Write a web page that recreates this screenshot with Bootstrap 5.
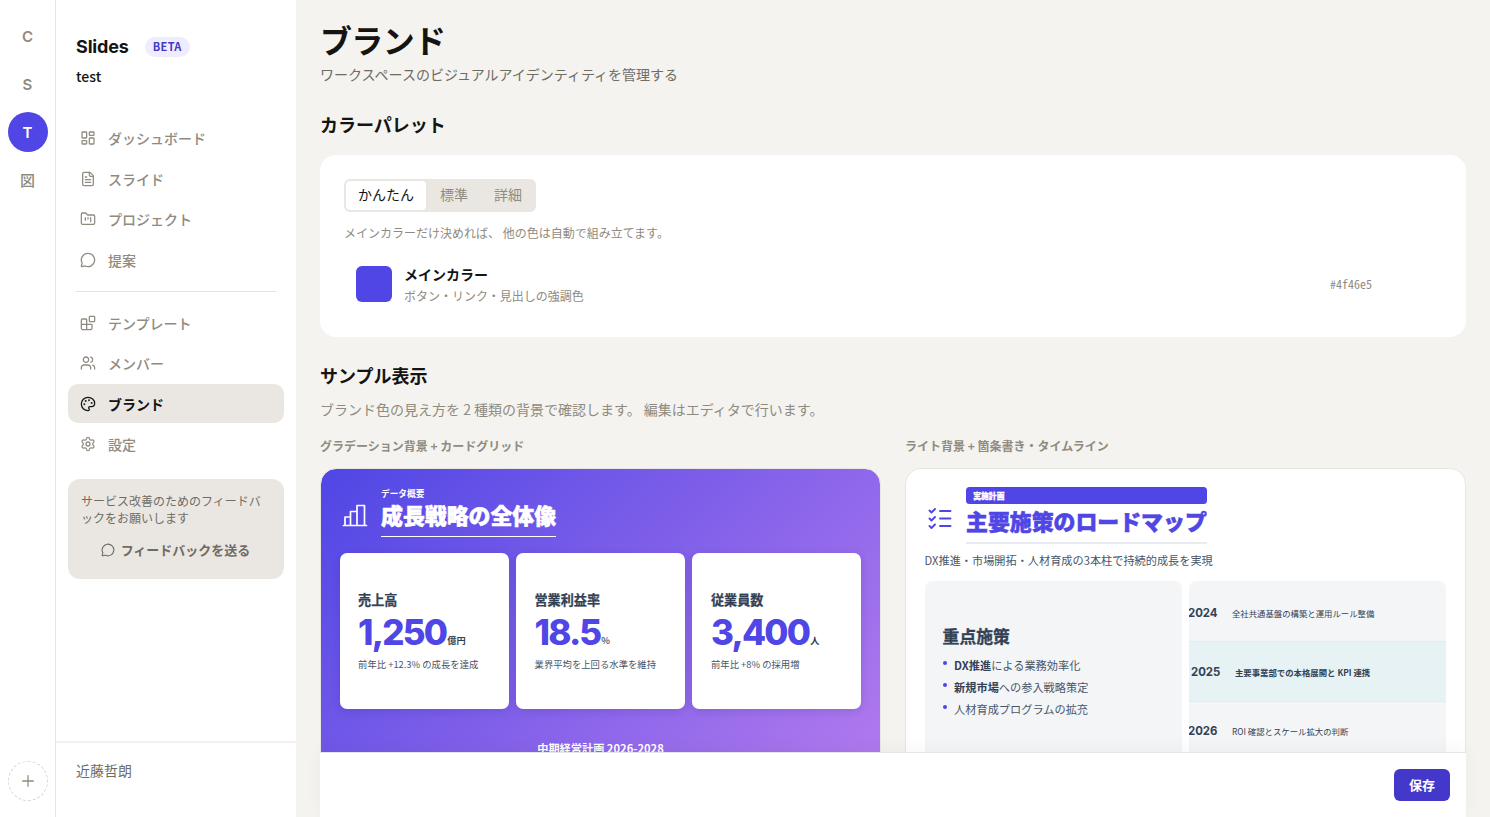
<!DOCTYPE html>
<html lang="ja">
<head>
<meta charset="utf-8">
<meta name="viewport" content="width=device-width, initial-scale=1">
<title>ブランド | Slides</title>
<link rel="stylesheet" href="https://cdn.jsdelivr.net/npm/bootstrap@5.3.0/dist/css/bootstrap.min.css">
<style>
:root{--ink:#141412;--muted:#8f8b80;--mid:#6f6c64;--brand:#4f46e5;--sand:#eae7e2;--line:#e4e4e2}
body{font-family:"Noto Sans CJK JP",sans-serif;background:#f4f3ef;color:var(--ink);font-size:14px;line-height:20px}
h1,h2,h3,p{margin:0}
.rail{width:56px;border-right:1px solid var(--line);background:#fff;padding:16px 0 16px}
.ws{width:40px;height:40px;font:600 15px/41.5px Inter,"Noto Sans CJK JP",sans-serif;color:var(--muted);text-align:center;border-radius:50%}
.ws.on{background:var(--brand);color:#fff}
.ws-add{border:1px dashed #d9d7d2;display:grid;place-items:center}
.side{width:240px;background:#fff}
.side-head{padding:35px 20px 0}
.side-nav{padding:33px 12px 0}
.brandname{font:700 18px/24px Inter,sans-serif;letter-spacing:-.15px}
.beta{background:#efedfc;color:#4338ca;font-size:11px;font-weight:700;letter-spacing:.3px;line-height:19px;border-radius:10px;padding:0 8px 1px;margin-top:-1px}
.navrow{height:38.4px;padding:0 12px;gap:12px;border-radius:10px;color:var(--muted);font-weight:500;margin-bottom:2.1px}
.navrow.on{background:var(--sand);color:var(--ink);font-weight:700}
.nav-sep{height:1px;background:var(--line);margin:12px 8px 11.5px}
.ic{fill:none;stroke:currentColor;stroke-width:1.9;stroke-linecap:round;stroke-linejoin:round;flex:none}
.fb{margin:14px 12px 0;background:var(--sand);border-radius:12px;height:99.5px;padding:12.5px 14px 0 13px;color:var(--mid)}
.fb p{font-size:12px;line-height:17px;white-space:nowrap}
.fb-link{gap:6px;margin-top:14px;font-size:13px}
.user{border-top:2px solid #f2f1f0;height:76px;padding:17px 20px;color:var(--mid)}
.content{padding:19px 24px 0}
h1{font-size:32px;font-weight:700;line-height:40px;letter-spacing:-.64px}
h2{font-size:18px;font-weight:700;line-height:28px}
.panel{background:#fff;border-radius:16px;height:182px;padding:24px}
.seg{background:var(--sand);border-radius:6px;padding:2px;height:33px}
.seg span{line-height:27.5px;padding:0 12px 0 14px;color:var(--muted);border-radius:4px}
.seg .on{background:#fff;color:var(--ink);padding:0 12px}
.swatch{width:36px;height:36px;border-radius:6px;background:var(--brand)}
.note{font-size:12px;line-height:18px;color:var(--muted)}
.hex{font:12px/18px "Noto Sans Mono CJK JP",monospace;color:var(--muted);margin-top:-1px}
.colour-row{gap:12px;padding:0 70px 0 12px;margin-top:22.5px;height:40px}
.cap{font-size:12px;line-height:18px;font-weight:700;color:var(--muted)}
.slide{height:316px;border-radius:16px;border:1px solid #e9e6e1;overflow:hidden;padding:0 18.6px;color:#334155;margin-top:13px}
.s1{background:linear-gradient(135deg,#4f46e5,#b47bee) padding-box}
.s2{background:#fff}
.ttl{font-size:21.9px;font-weight:900;line-height:28px;-webkit-text-stroke:.55px currentColor}
.kpi{background:#fff;border-radius:7px;height:156px;padding:38px 18.5px 0;box-shadow:0 2px 8px rgba(30,20,90,.14)}
.kpi h3{font-size:13.1px;font-weight:700;line-height:18px;-webkit-text-stroke:.25px currentColor}
.num{font:800 35px/44px Inter,sans-serif;letter-spacing:-1.8px;color:var(--brand);margin-top:1px}
.unit{font-size:9.2px;font-weight:700;line-height:12px;margin-left:1px;position:relative;top:-1px}
.kpi p{font-size:9.35px;line-height:14px;color:#475569;margin-top:3.5px}
.boxes{display:grid;grid-template-columns:1fr 1fr;gap:7px}
.box{background:#f4f5f7;border-radius:7px;height:200px;overflow:hidden;min-width:0}
.box-title{font-size:16.8px;line-height:24px;margin-bottom:6px;-webkit-text-stroke:.35px currentColor}
.tag{background:var(--brand);color:#fff;border-radius:3.5px;height:17px;line-height:17px;font-size:7.8px;font-weight:900;padding-left:7.3px;-webkit-text-stroke:.3px currentColor}
.pts{list-style:none;padding:0;margin:0;font-size:11.2px;line-height:22px;color:#475569}
.pts li{display:flex;gap:7.5px}
.pts li::before{content:"";width:4px;height:4px;border-radius:50%;background:var(--brand);margin-top:7px}
.pts b{color:#334155}
.yr{height:60px;border-bottom:1px solid #e6eaee;font-size:8.4px}
.yr b{font:700 11.4px/16px Inter,sans-serif;width:44px;margin-left:-1px}
.yr.on{background:#e7f2f4;padding-left:3px;font-weight:700}
.foot{height:65px;background:#fff;border-top:1px solid #e7e5df;box-shadow:0 -4px 16px rgba(0,0,0,.04);left:320px;width:1146px}
.save{background:#4338ca;color:#fff;border-radius:6px;width:56px;height:32px;font-size:13px;line-height:32px;font-weight:700;padding:0;border:0}
</style>
</head>
<body class="overflow-hidden">
<div class="d-flex vh-100 overflow-hidden">
  <nav class="rail d-flex flex-column align-items-center gap-2 flex-shrink-0">
    <div class="ws">C</div><div class="ws">S</div><div class="ws on">T</div><div class="ws fw-medium">図</div>
    <div class="ws ws-add mt-auto"><svg class="ic" width="16" height="16" viewBox="0 0 24 24"><path d="M4 12h16M12 4v16"/></svg></div>
  </nav>
  <aside class="side d-flex flex-column flex-shrink-0">
    <div class="side-head">
      <div class="d-flex align-items-center gap-3"><span class="brandname">Slides</span><span class="beta">BETA</span></div>
      <div class="fw-medium" style="margin-top:7px">test</div>
    </div>
    <div class="side-nav">
      <div class="navrow d-flex align-items-center"><svg class="ic" width="16" height="16" viewBox="0 0 24 24"><rect x="3" y="3" width="7" height="9" rx="1"/><rect x="14" y="3" width="7" height="5" rx="1"/><rect x="14" y="12" width="7" height="9" rx="1"/><rect x="3" y="16" width="7" height="5" rx="1"/></svg>ダッシュボード</div>
      <div class="navrow d-flex align-items-center"><svg class="ic" width="16" height="16" viewBox="0 0 24 24"><path d="M15 2H6a2 2 0 0 0-2 2v16a2 2 0 0 0 2 2h12a2 2 0 0 0 2-2V7Z"/><path d="M14 2v4a2 2 0 0 0 2 2h4M10 9H8M16 13H8M16 17H8"/></svg>スライド</div>
      <div class="navrow d-flex align-items-center"><svg class="ic" width="16" height="16" viewBox="0 0 24 24"><path d="M4 20h16a2 2 0 0 0 2-2V8a2 2 0 0 0-2-2h-7.93a2 2 0 0 1-1.66-.9l-.82-1.2A2 2 0 0 0 7.93 3H4a2 2 0 0 0-2 2v13c0 1.1.9 2 2 2Z"/><path d="M8 10v4M12 10v2M16 10v6"/></svg>プロジェクト</div>
      <div class="navrow d-flex align-items-center"><svg class="ic" width="16" height="16" viewBox="0 0 24 24"><path d="M2.992 16.342a2 2 0 0 1 .094 1.167l-1.065 3.29a1 1 0 0 0 1.236 1.168l3.413-.998a2 2 0 0 1 1.099.092 10 10 0 1 0-4.777-4.719"/></svg>提案</div>
      <div class="nav-sep"></div>
      <div class="navrow d-flex align-items-center"><svg class="ic" width="16" height="16" viewBox="0 0 24 24"><rect x="14" y="2" width="8" height="8" rx="1"/><path d="M10 22V7a1 1 0 0 0-1-1H4a2 2 0 0 0-2 2v12a2 2 0 0 0 2 2h12a2 2 0 0 0 2-2v-5a1 1 0 0 0-1-1H2"/></svg>テンプレート</div>
      <div class="navrow d-flex align-items-center"><svg class="ic" width="16" height="16" viewBox="0 0 24 24"><path d="M16 21v-2a4 4 0 0 0-4-4H6a4 4 0 0 0-4 4v2"/><circle cx="9" cy="7" r="4"/><path d="M22 21v-2a4 4 0 0 0-3-3.87M16 3.13a4 4 0 0 1 0 7.75"/></svg>メンバー</div>
      <div class="navrow on d-flex align-items-center"><svg class="ic" width="16" height="16" viewBox="0 0 24 24"><path d="M12 22a1 1 0 0 1 0-20 10 9 0 0 1 10 9 5 5 0 0 1-5 5h-2.25a1.75 1.75 0 0 0-1.4 2.8l.3.4a1.75 1.75 0 0 1-1.4 2.8z"/><g fill="currentColor"><circle cx="13.5" cy="6.5" r=".5"/><circle cx="17.5" cy="10.5" r=".5"/><circle cx="6.5" cy="12.5" r=".5"/><circle cx="8.5" cy="7.5" r=".5"/></g></svg>ブランド</div>
      <div class="navrow d-flex align-items-center"><svg class="ic" width="16" height="16" viewBox="0 0 24 24"><path d="M9.671 4.136a2.34 2.34 0 0 1 4.659 0 2.34 2.34 0 0 0 3.319 1.915 2.34 2.34 0 0 1 2.33 4.033 2.34 2.34 0 0 0 0 3.831 2.34 2.34 0 0 1-2.33 4.033 2.34 2.34 0 0 0-3.319 1.915 2.34 2.34 0 0 1-4.659 0 2.34 2.34 0 0 0-3.32-1.915 2.34 2.34 0 0 1-2.33-4.033 2.34 2.34 0 0 0 0-3.831A2.34 2.34 0 0 1 6.35 6.051a2.34 2.34 0 0 0 3.319-1.915"/><circle cx="12" cy="12" r="3"/></svg>設定</div>
    </div>
    <div class="fb flex-shrink-0"><p>サービス改善のためのフィードバ<br>ックをお願いします</p>
      <div class="fb-link d-flex justify-content-center align-items-center fw-bold"><svg class="ic" width="14" height="14" viewBox="0 0 24 24"><path d="M2.992 16.342a2 2 0 0 1 .094 1.167l-1.065 3.29a1 1 0 0 0 1.236 1.168l3.413-.998a2 2 0 0 1 1.099.092 10 10 0 1 0-4.777-4.719"/></svg>フィードバックを送る</div>
    </div>
    <div class="user mt-auto">近藤哲朗</div>
  </aside>
  <main class="content flex-grow-1">
    <h1>ブランド</h1>
    <p style="color:var(--mid);margin-top:5px">ワークスペースのビジュアルアイデンティティを管理する</p>
    <h2 style="margin-top:26px;margin-bottom:16.5px">カラーパレット</h2>
    <section class="panel">
      <div class="seg d-inline-flex align-top"><span class="on">かんたん</span><span>標準</span><span>詳細</span></div>
      <p class="note" style="margin-top:12px">メインカラーだけ決めれば、 他の色は自動で組み立てます。</p>
      <div class="colour-row d-flex align-items-center">
        <div class="swatch"></div>
        <div class="flex-grow-1"><div class="fw-bold" style="line-height:21px">メインカラー</div><div class="note" style="margin-top:2px">ボタン・リンク・見出しの強調色</div></div>
        <span class="hex">#4f46e5</span>
      </div>
    </section>
    <h2 style="margin-top:24px">サンプル表示</h2>
    <p style="color:var(--muted);margin-top:10px">ブランド色の見え方を 2 種類の背景で確認します。 編集はエディタで行います。</p>
    <div class="row" style="--bs-gutter-x:24px;margin-top:18px">
      <div class="col-6">
        <div class="cap">グラデーション背景 + カードグリッド</div>
        <div class="slide s1">
          <div class="d-flex text-white" style="padding-top:18px;height:84px">
            <svg class="ic" width="30" height="30" viewBox="0 0 30 30" style="margin-top:14px;stroke-width:1.7"><path d="M3.500 24.500H26.500M5 24.500V16h5.500v8.500M10.500 24.500V10.500H17v14M17 24.500V4.500h7.500v20"/></svg>
            <div style="margin-left:11.4px"><div class="fw-bold" style="font-size:8.7px;line-height:13px">データ概要</div><div class="ttl" style="border-bottom:1.5px solid #fff;height:36px;margin-top:1.500px">成長戦略の全体像</div></div>
          </div>
          <div class="d-flex" style="gap:7.5px">
            <div class="kpi flex-fill w-100"><h3>売上高</h3><div class="d-flex align-items-baseline"><span class="num">1,250</span><span class="unit">億円</span></div><p>前年比 +12.3% の成長を達成</p></div>
            <div class="kpi flex-fill w-100"><h3>営業利益率</h3><div class="d-flex align-items-baseline"><span class="num">18.5</span><span class="unit fw-medium">%</span></div><p>業界平均を上回る水準を維持</p></div>
            <div class="kpi flex-fill w-100"><h3>従業員数</h3><div class="d-flex align-items-baseline"><span class="num">3,400</span><span class="unit">人</span></div><p>前年比 +8% の採用増</p></div>
          </div>
          <div class="text-center text-white fw-bold" style="font-size:11.2px;line-height:16px;margin-top:31px">中期経営計画 2026-2028</div>
        </div>
      </div>
      <div class="col-6">
        <div class="cap">ライト背景 + 箇条書き・タイムライン</div>
        <div class="slide s2">
          <div class="d-flex" style="padding-top:18px;color:var(--brand)">
            <svg class="ic" width="30" height="30" viewBox="0 0 30 30" style="margin-top:16px"><path d="M4.500 7.500l2 2 3.500-3.500M4.500 15.500l2 2 3.500-3.500M4.500 23l2 2 3.500-3.500M15 8H25.500M15 15.500H25.500M15 23H25.500"/></svg>
            <div style="margin-left:11.4px"><div class="tag">実施計画</div><div class="ttl" style="border-bottom:2px solid #e8ecf2;height:38.500px;margin-top:1.500px;padding-top:2px">主要施策のロードマップ</div></div>
          </div>
          <p style="font-size:11.18px;line-height:18px;color:#475569;margin-top:7.500px;margin-bottom:12px">DX推進・市場開拓・人材育成の3本柱で持続的成長を実現</p>
          <div class="boxes">
            <div class="box" style="padding:42.500px 18px 0"><div class="box-title fw-bold">重点施策</div>
              <ul class="pts"><li><span><b>DX推進</b>による業務効率化</span></li><li><span><b>新規市場</b>への参入戦略策定</span></li><li><span>人材育成プログラムの拡充</span></li></ul></div>
            <div class="box">
              <div class="yr d-flex align-items-center" style="height:61px;padding-top:3px"><b>2024</b>全社共通基盤の構築と運用ルール整備</div>
              <div class="yr on d-flex align-items-center"><b>2025</b>主要事業部での本格展開と KPI 連携</div>
              <div class="yr d-flex align-items-center" style="height:58px"><b>2026</b>ROI 確認とスケール拡大の判断</div>
            </div>
          </div>
        </div>
      </div>
    </div>
  </main>
</div>
<footer class="foot position-fixed bottom-0 d-flex justify-content-end align-items-center px-3"><button class="save">保存</button></footer>
<script src="https://cdn.jsdelivr.net/npm/bootstrap@5.3.0/dist/js/bootstrap.bundle.min.js"></script>
</body>
</html>
